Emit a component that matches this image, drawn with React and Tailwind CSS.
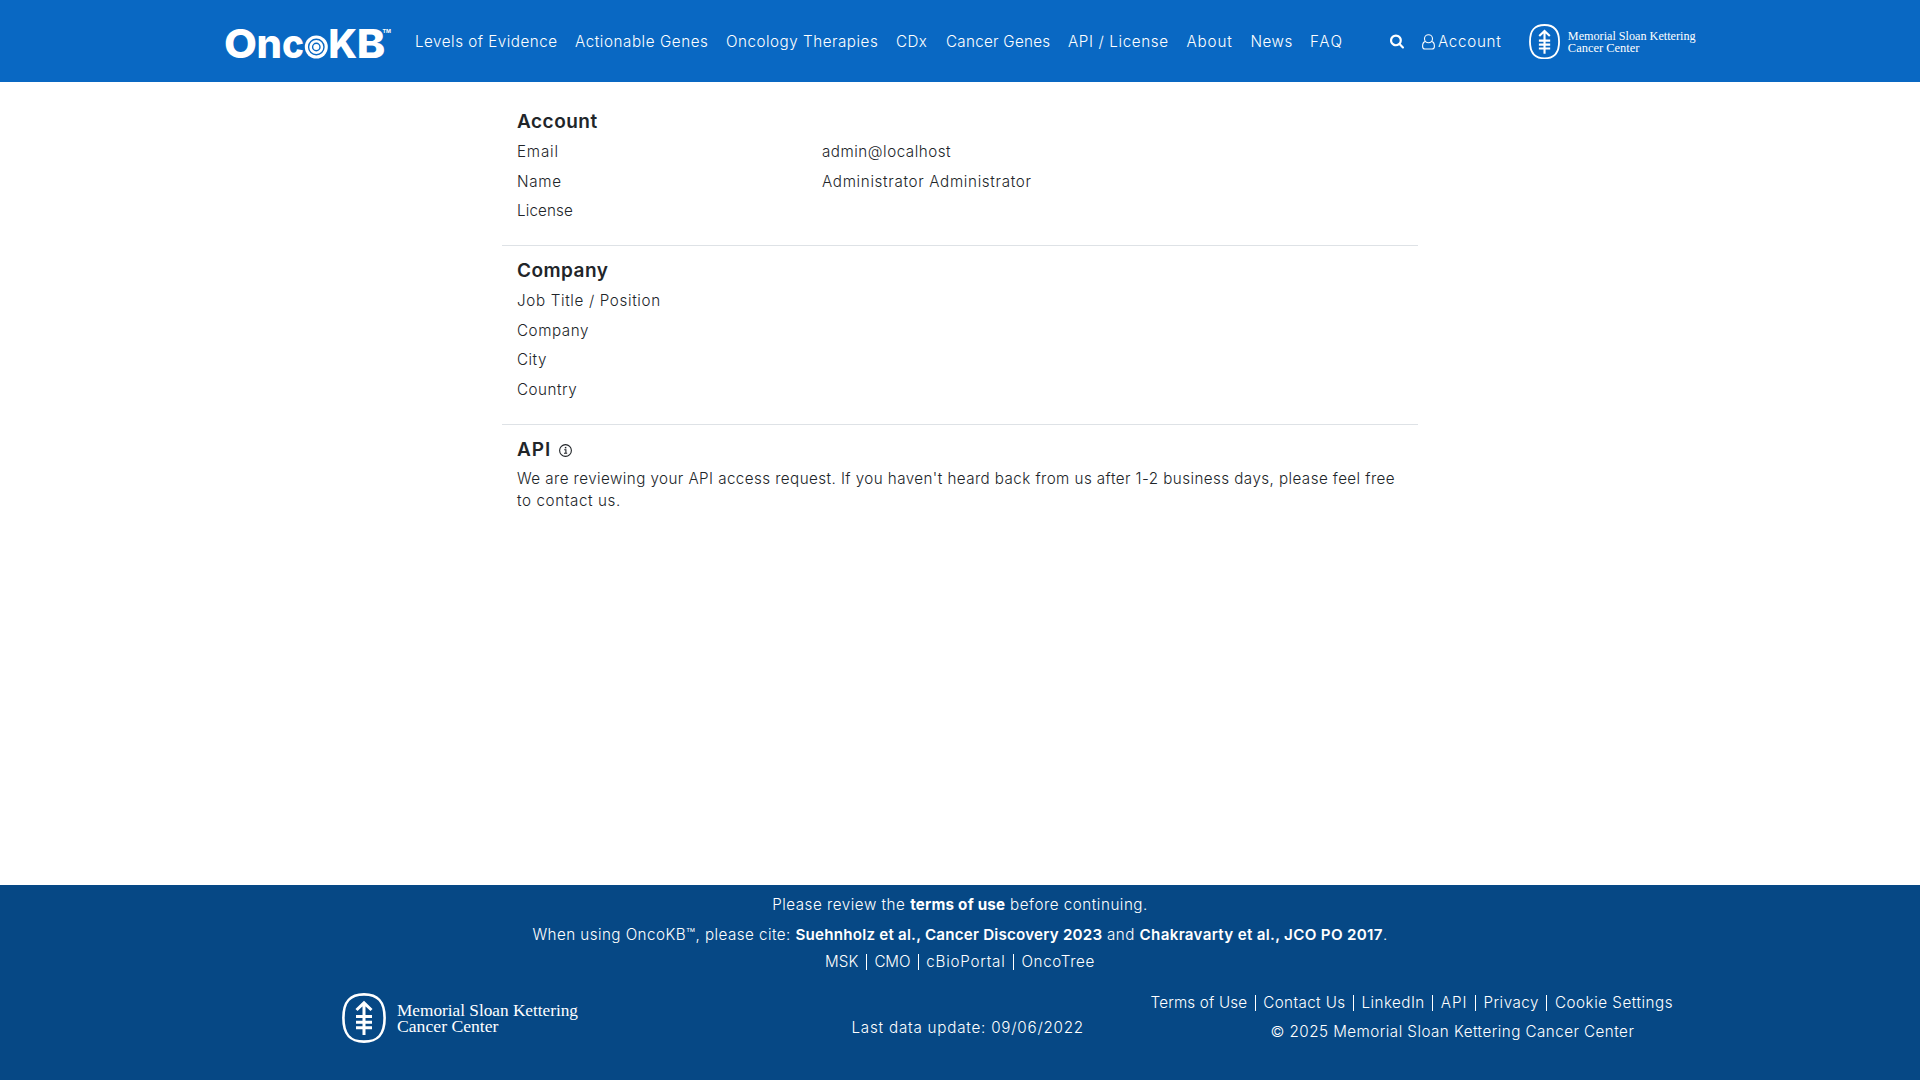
import React from "react";

const navItems = [
  { label: "Levels of Evidence", cls: "w-[160px] tracking-[0.51px]" },
  { label: "Actionable Genes", cls: "w-[151px] tracking-[0.56px]" },
  { label: "Oncology Therapies", cls: "w-[170px] tracking-[0.52px]" },
  { label: "CDx", cls: "w-[50px] tracking-[0.4px]" },
  { label: "Cancer Genes", cls: "w-[122px] tracking-[0.28px]" },
  { label: "API / License", cls: "w-[118.5px] tracking-[0.62px]" },
  { label: "About", cls: "w-[64px] tracking-[0.85px]" },
  { label: "News", cls: "w-[59.5px] tracking-[0.5px]" },
  { label: "FAQ", cls: "w-[80px] tracking-[1.6px]" },
];

const accountRows = [
  { label: "Email", value: "admin@localhost", lc: "tracking-[0.8px]", vc: "tracking-[0.52px]" },
  { label: "Name", value: "Administrator Administrator", lc: "tracking-[0.7px]", vc: "tracking-[0.67px]" },
  { label: "License", value: "", lc: "tracking-[0.15px]", vc: "" },
];

const companyRows = [
  { label: "Job Title / Position", value: "", lc: "tracking-[0.65px]", vc: "" },
  { label: "Company", value: "", lc: "tracking-[0.55px]", vc: "" },
  { label: "City", value: "", lc: "tracking-[0.5px]", vc: "" },
  { label: "Country", value: "", lc: "tracking-[0.5px]", vc: "" },
];

const partnerLinks = [
  { label: "MSK", cls: "tracking-[0.1px]" },
  { label: "CMO", cls: "tracking-[-0.1px]" },
  { label: "cBioPortal", cls: "tracking-[0.75px]" },
  { label: "OncoTree", cls: "tracking-[0.65px]" },
];

const legalLinks = [
  { label: "Terms of Use", cls: "tracking-[0.18px]" },
  { label: "Contact Us", cls: "tracking-[0.4px]" },
  { label: "LinkedIn", cls: "tracking-[0.45px]" },
  { label: "API", cls: "tracking-[1px]" },
  { label: "Privacy", cls: "tracking-[0.5px]" },
  { label: "Cookie Settings", cls: "tracking-[0.52px]" },
];

function OncoLogo() {
  return (
    <svg className="block h-[60px] w-[172px] shrink-0" viewBox="-4 -14.5 172 60" fill="#fff" aria-label="OncoKB">
      <g fontFamily="Inter, sans-serif" fontWeight="800">
        <text x="-1" y="31.4" fontSize="39.5" textLength="33" lengthAdjust="spacingAndGlyphs">O</text>
        <text x="31.6" y="31.4" fontSize="40" textLength="25.5" lengthAdjust="spacingAndGlyphs">n</text>
        <text x="57" y="31.4" fontSize="40" textLength="22" lengthAdjust="spacingAndGlyphs">c</text>
        <text x="103.2" y="31.4" fontSize="39" textLength="29" lengthAdjust="spacingAndGlyphs">K</text>
        <text x="131.8" y="31.4" fontSize="39" textLength="28.5" lengthAdjust="spacingAndGlyphs">B</text>
      </g>
      <text x="157.5" y="6.6" fontSize="5.4" fontWeight="700" fontFamily="Inter, sans-serif" textLength="8.500" lengthAdjust="spacingAndGlyphs">TM</text>
      <circle cx="91.3" cy="20.5" r="11.5" />
      <g fill="none" stroke="#0968C3" strokeWidth="1.4">
        <circle cx="91.3" cy="20.5" r="7.7" />
        <circle cx="91.3" cy="20.5" r="3.7" />
      </g>
    </svg>
  );
}

function MskLogo({ className }) {
  return (
    <svg className={className} viewBox="0 0 238 50" fill="none" stroke="#fff" aria-label="Memorial Sloan Kettering Cancer Center">
      <path strokeWidth="2.6" d="M22 1.4C36 1.4 42.6 8.5 42.6 25S36 48.6 22 48.6 1.4 41.5 1.4 25 8 1.4 22 1.4Z" />
      <path strokeWidth="3" d="M22 10V42M14.5 17L22 9.8L29.5 17M14 23.6H30M14 29.2H30M14 34.8H30" />
      <g fill="#fff" stroke="none" fontFamily="'Liberation Serif', serif" fontSize="17.2">
        <text x="55" y="22.6" textLength="181" lengthAdjust="spacingAndGlyphs">Memorial Sloan Kettering</text>
        <text x="55" y="39.4" textLength="101.5" lengthAdjust="spacingAndGlyphs">Cancer Center</text>
      </g>
    </svg>
  );
}

function SearchIcon() {
  return (
    <svg className="h-[15px] w-[14px]" viewBox="0 0 1664 1664" fill="#fff">
      <path d="M1152 704q0-185-131.500-316.500t-316.500-131.500-316.500 131.500-131.500 316.500 131.500 316.500 316.500 131.500 316.500-131.500 131.500-316.500zm512 832q0 52-38 90t-90 38q-54 0-90-38l-343-342q-179 124-399 124-143 0-273.500-55.500t-225-150-150-225-55.500-273.500 55.500-273.500 150-225 225-150 273.500-55.500 273.500 55.500 225 150 150 225 55.500 273.500q0 220-124 399l343 343q37 37 37 90z" />
    </svg>
  );
}

function UserIcon() {
  return (
    <svg className="h-[16px] w-[13px] shrink-0" viewBox="0 0 13 16" fill="none" stroke="#fff" strokeWidth="1.1">
      <path d="M3.3 7.6C1.4 7.8.6 10 .6 12.2.6 14 1.6 15 3 15h7c1.4 0 2.4-1 2.4-2.8 0-2.2-.8-4.4-2.7-4.6" />
      <circle cx="6.5" cy="4.7" r="4" />
    </svg>
  );
}

function Rows({ rows }) {
  return (
    <div className="flex flex-col gap-[7.5px]">
      {rows.map((r) => (
        <div key={r.label} className="flex h-[22px]">
          <div className={`w-[305px] ${r.lc}`}>{r.label}</div>
          <div className={r.vc}>{r.value}</div>
        </div>
      ))}
    </div>
  );
}

function Links({ links }) {
  return links.map((l, i) => (
    <React.Fragment key={l.label}>
      {i > 0 && <span className="mx-[7.5px] h-4 w-px bg-white" />}
      <span className={l.cls}>{l.label}</span>
    </React.Fragment>
  ));
}

export default function App() {
  return (
    <div className="flex h-screen flex-col overflow-hidden bg-white font-['Inter',sans-serif] text-[15.2px] font-[350] leading-[22px] text-[#212529] whitespace-nowrap">
      <header className="flex h-[82px] shrink-0 items-center bg-[#0968C3] pl-[221px] pt-px text-white">
        <OncoLogo />
        <nav className="ml-[22px] flex">
          {navItems.map((n) => (
            <a key={n.label} className={n.cls}>{n.label}</a>
          ))}
        </nav>
        <SearchIcon />
        <div className="ml-[17.5px] flex w-[107px] items-center gap-[3.5px]">
          <UserIcon />
          <span className="tracking-[0.7px]">Account</span>
        </div>
        <MskLogo className="block h-[35.3px] w-[168px]" />
      </header>

      <main className="w-[916px] flex-1 self-center pt-[29.4px]">
        <section className="h-[133.6px] px-[15px]">
          <h5 className="mb-[7.5px] text-[19px] font-semibold leading-[22.5px] tracking-[0.5px]">Account</h5>
          <Rows rows={accountRows} />
        </section>
        <hr className="border-[#dee2e6]" />
        <section className="h-[178px] px-[15px] pt-[14.4px]">
          <h5 className="mb-[7.3px] text-[19px] font-semibold leading-[22.5px] tracking-[0.45px]">Company</h5>
          <Rows rows={companyRows} />
        </section>
        <hr className="border-[#dee2e6]" />
        <section className="px-[15px] pt-[14.4px]">
          <div className="mb-[6px] flex items-center">
            <h5 className="w-[41.5px] text-[19px] font-semibold leading-[22.5px] tracking-[1px]">API</h5>
            <svg className="h-[13px] w-[13px]" viewBox="0 0 13 13" fill="none" stroke="#212529">
              <circle cx="6.5" cy="6.5" r="5.9" strokeWidth="1.1" />
              <path d="M5.2 5.7H6.9V9.3M5 9.3H8.2" strokeWidth="1.1" />
              <path d="M6.6 2.9V4.4" strokeWidth="1.5" />
            </svg>
          </div>
          <p className="tracking-[0.43px]">
            We are reviewing your API access request. If you haven't heard back from us after 1-2 business days, please feel free
            <br />
            <span className="tracking-[0.6px]">to contact us.</span>
          </p>
        </section>
      </main>

      <footer className="h-[195px] shrink-0 bg-[#064885] text-white">
        <div className="flex flex-col items-center pt-[9px]">
          <div className="mb-[8px] tracking-[0.52px]">
            Please review the <b className="font-bold tracking-[0.2px]">terms of use</b> before continuing.
          </div>
          <div className="mb-[5px] tracking-[0.45px]">
            When using OncoKB™, please cite: <b className="font-semibold tracking-[0.2px]">Suehnholz et al., Cancer Discovery 2023</b> and{" "}
            <b className="font-semibold tracking-[0.3px]">Chakravarty et al., JCO PO 2017</b>.
          </div>
          <div className="flex items-center">
            <Links links={partnerLinks} />
          </div>
        </div>
        <div className="flex pl-[342px] pt-[20px]">
          <MskLogo className="block h-[50px] w-[238px]" />
          <div className="ml-[271.5px] w-[299px] pt-[24px] tracking-[0.78px]">Last data update: 09/06/2022</div>
          <div className="w-[530px]">
            <div className="-mt-px flex items-center">
              <Links links={legalLinks} />
            </div>
            <div className="mt-[7px] pl-[120px] tracking-[0.46px]">© 2025 Memorial Sloan Kettering Cancer Center</div>
          </div>
        </div>
      </footer>
    </div>
  );
}
